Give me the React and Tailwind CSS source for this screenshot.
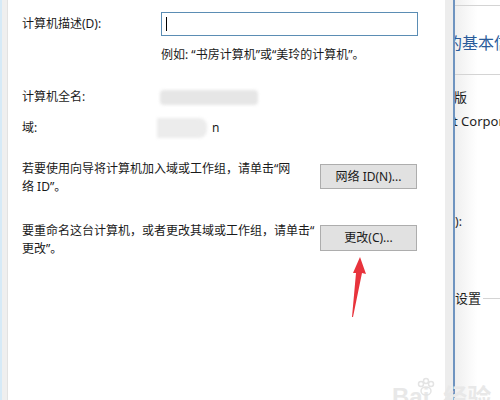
export default function App() {
  const font = { fontFamily: '"Noto Sans", "Noto Sans CJK SC", sans-serif' };

  return (
    <div
      className="relative flex h-[400px] w-[500px] overflow-hidden bg-white text-[12px] leading-[18px] text-[#1a1a1a]"
      style={font}
    >
      {/* left edge of window behind */}
      <div className="w-[2px] bg-[#d6eaf7]" />
      <div className="w-[5px] bg-[#efefef]" />
      <div className="w-px bg-[#e2e2e2]" />

      {/* dialog */}
      <div className="flex w-[437px] flex-col bg-white pl-[14px]">
        <div className="mt-[12px] flex items-center">
          <div className="w-[139px]">计算机描述(D):</div>
          <div className="flex h-[24px] w-[257px] items-center border border-[#5b8db4] bg-white pl-[4px]">
            <div className="h-[14px] w-px bg-black" />
          </div>
        </div>

        <div className="mt-[10px] pl-[139px]">例如: “书房计算机”或“美玲的计算机”。</div>

        <div className="mt-[24px] flex items-center">
          <div className="w-[138px]">计算机全名:</div>
          <div className="h-[15px] w-[98px] rounded-sm bg-[#e6e6e6] blur-[1.5px]" />
        </div>

        <div className="mt-[12px] flex items-center">
          <div className="w-[135px]">域:</div>
          <div className="h-[20px] w-[50px] rounded-r-lg bg-[#ececec] blur-[1.5px]" />
          <div className="ml-[5px]">n</div>
        </div>

        <div className="mt-[22px] flex items-start">
          <div className="w-[298px] whitespace-nowrap">
            若要使用向导将计算机加入域或工作组，请单击“网
            <br />
            络 ID”。
          </div>
          <button className="mt-[4px] h-[25px] w-[97px] border border-[#adadad] bg-[#e1e1e1] text-[12px] text-[#1a1a1a]">
            网络 ID(N)...
          </button>
        </div>

        <div className="mt-[26px] flex items-start">
          <div className="w-[298px] whitespace-nowrap">
            要重命名这台计算机，或者更改其域或工作组，请单击“
            <br />
            更改”。
          </div>
          <button className="mt-[3px] h-[26px] w-[97px] border border-[#adadad] bg-[#e1e1e1] text-[12px] text-[#1a1a1a]">
            更改(C)...
          </button>
        </div>
      </div>

      {/* gap between dialog and system window */}
      <div className="w-[8px] bg-[#ededed]" />
      <div className="w-[2px] bg-[#6f94c0]" />

      {/* system window behind */}
      <div className="flex flex-1 flex-col overflow-hidden bg-gradient-to-r from-[#efefef] via-white to-white text-[#1e1e1e]">
        <div className="mt-[5px] h-px bg-[#d4d4d4]" />
        <div className="-ml-[9px] mt-[26px] whitespace-nowrap text-[16px] leading-[22px] text-[#2a5b9a]">
          的基本信息
        </div>
        <div className="mt-[20px] h-px bg-[#d4d4d4]" />
        <div className="-ml-[1px] mt-[13px] whitespace-nowrap text-[13px]">版</div>
        <div className="-ml-[2px] mt-[6px] whitespace-nowrap text-[13px]">t Corporation</div>
        <div className="-ml-[3px] mt-[83px] whitespace-nowrap text-[12px]">l):</div>
        <div className="mt-[58px] flex items-center whitespace-nowrap text-[13px]">
          <span>设置</span>
          <div className="ml-[2px] h-px flex-1 bg-[#d4d4d4]" />
        </div>
      </div>

      {/* red annotation arrow */}
      <svg
        className="absolute left-[345px] top-[250px]"
        width="30"
        height="72"
        viewBox="0 0 30 72"
      >
        <polygon points="15,7 21,24 17,23 8,67 7,67 11,23 8,23" fill="#e8333c" />
      </svg>

      {/* watermark */}
      <div className="absolute left-[392px] top-[376px] flex items-end text-[#e8e8e8]">
        <span className="text-[24px] font-bold leading-[30px]" style={{ fontFamily: '"Liberation Sans", sans-serif' }}>
          Bai
        </span>
        <svg width="22" height="22" viewBox="0 0 22 22" className="-ml-[14px] mb-[14px]">
          <circle cx="6" cy="8" r="2.5" fill="none" stroke="#e4e4e4" strokeWidth="1.5" />
          <circle cx="11" cy="5" r="2.5" fill="none" stroke="#e4e4e4" strokeWidth="1.5" />
          <circle cx="16" cy="8" r="2.5" fill="none" stroke="#e4e4e4" strokeWidth="1.5" />
          <ellipse cx="11" cy="15" rx="5" ry="4" fill="none" stroke="#e4e4e4" strokeWidth="1.5" />
        </svg>
        <span className="ml-[6px] text-[24px] font-bold leading-[30px]">经验</span>
      </div>
    </div>
  );
}
